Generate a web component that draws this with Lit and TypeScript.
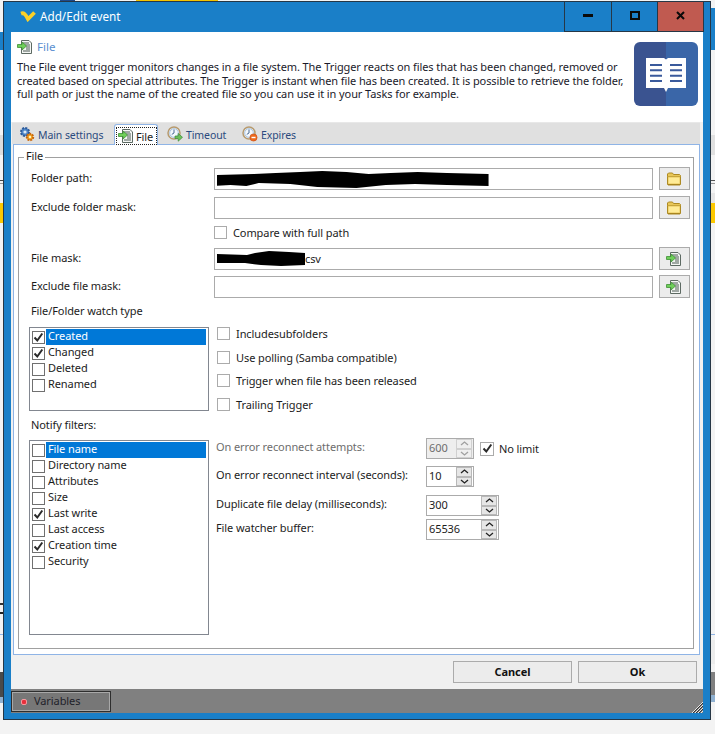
import { LitElement, html, css, svg } from "lit";
import { customElement } from "lit/decorators.js";

const fileIcon = () => html`<svg class="ic" width="16" height="16" viewBox="0 0 16 16">
  <path d="M4.500 1.500h7.500l2.500 2.500v10.500h-10z" fill="#f4f6f4" stroke="#5d6a63"/>
  <path d="M6 4h6M8 6h5M9 8h4M9 10h4M6 12h7" stroke="#4d5a55" stroke-width="1"/>
  <path d="M0.500 5.500h4.500v-2.500l4.500 4-4.500 4v-2.500h-4.500z" fill="#6fcf5a" stroke="#3f8f35" stroke-width=".8"/>
</svg>`;

const gearIcon = () => html`<svg class="ic" width="16" height="16" viewBox="0 0 16 16">
  <circle cx="6" cy="6" r="4" fill="#4f86c8" stroke="#2c5a9a" stroke-width="2" stroke-dasharray="2 1.100"/>
  <circle cx="6" cy="6" r="1.600" fill="#dbe8f6"/>
  <circle cx="11" cy="11" r="3.200" fill="#f0a020" stroke="#c8660e" stroke-width="2" stroke-dasharray="1.800 1"/>
  <circle cx="11" cy="11" r="1.200" fill="#fff2c4"/>
</svg>`;

const clockIcon = (badge: string) => html`<svg class="ic" width="16" height="16" viewBox="0 0 16 16">
  <circle cx="7" cy="7" r="6" fill="#e6eef6" stroke="#b79a6e" stroke-width="1.500"/>
  <circle cx="7" cy="7" r="4.300" fill="#f4f8fc" stroke="#8fb0d4" stroke-width=".7"/>
  <path d="M7 3.500v3.500l-2.200 1.400" fill="none" stroke="#4a6a94" stroke-width="1"/>
  ${badge === "go"
    ? svg`<path d="M8 10h3.200v-2.600l4.300 3.900-4.300 3.900v-2.600h-3.200z" fill="#6cc05a" stroke="#3d8a36" stroke-width=".7"/>`
    : svg`<circle cx="11.500" cy="11.500" r="3.600" fill="#ee6a1e" stroke="#c94a10" stroke-width=".6"/><path d="M9.500 11.500h4" stroke="#fff" stroke-width="1.400"/>`}
</svg>`;

const folderIcon = () => html`<svg width="16" height="14" viewBox="0 0 16 14">
  <path d="M1.500 12.500v-10.500l1-1h4l1 1.500h6l1 1v9l-.5.500h-12z" fill="#e8c658" stroke="#ad8a24"/>
  <path d="M2.500 5.500h11v6h-11z" fill="#ffeb96"/>
  <path d="M1.500 4.500h13" stroke="#c7a53c"/>
  <path d="M2 12.500h12" stroke="#a8841e"/>
</svg>`;

const check = (on: boolean) => html`<span class="cb">${on
  ? html`<svg width="11" height="11" viewBox="0 0 11 11"><path d="M1.500 5.500l2.800 3 5-7" fill="none" stroke="#2a2a2a" stroke-width="2"/></svg>`
  : ""}</span>`;

const spin = (value: string, wide: boolean, off = false) => html`<div class="spin ${wide ? "wide" : ""} ${off ? "off" : ""}">
  <span class="val">${value}</span>
  <span class="arrows">
    <span class="ar"><svg width="9" height="5" viewBox="0 0 9 5"><path d="M1 4l3.500-3 3.500 3" fill="none" stroke="currentColor" stroke-width="1.300"/></svg></span>
    <span class="ar"><svg width="9" height="5" viewBox="0 0 9 5"><path d="M1 1l3.500 3 3.500-3" fill="none" stroke="currentColor" stroke-width="1.300"/></svg></span>
  </span>
</div>`;

const BACKDROP = [
  [60, 0, 15, 1, "#1f4a8a"], [136, 0, 82, 1, "#f4c400"],
  [0, 32, 3, 18, "#1a7fc8"], [0, 135, 3, 20, "#dcdcdc"], [0, 180, 3, 1, "#444"], [0, 183, 3, 1, "#999"],
  [0, 203, 3, 20, "#fcc800"], [0, 603, 3, 2, "#333"], [0, 612, 3, 2, "#222"], [0, 634, 3, 1, "#8fb4e6"],
  [0, 672, 3, 25, "#4a4a4a"], [0, 697, 3, 6, "#8fb0d0"],
  [711, 8, 4, 42, "#1a7fc8"], [711, 135, 4, 20, "#e0e0e0"], [711, 180, 4, 1, "#555"], [711, 183, 4, 1, "#999"],
  [711, 193, 4, 10, "#e6e6e6"], [711, 203, 4, 20, "#fcc800"], [711, 634, 4, 1, "#8fb4e6"],
  [711, 640, 4, 24, "#ececec"], [711, 672, 4, 23, "#808080"], [711, 695, 4, 7, "#8fb0d0"],
];

const TABS = [
  { label: "Main settings", icon: gearIcon, w: 83, m: 0 },
  { label: "File", icon: fileIcon, w: 44, m: 12, active: true },
  { label: "Timeout", icon: () => clockIcon("go"), w: 61, m: 9 },
  { label: "Expires", icon: () => clockIcon("stop"), w: 54, m: 14 },
];

const WATCH = [["Created", true], ["Changed", true], ["Deleted", false], ["Renamed", false]] as [string, boolean][];
const NOTIFY = [
  ["File name", false], ["Directory name", false], ["Attributes", false], ["Size", false],
  ["Last write", true], ["Last access", false], ["Creation time", true], ["Security", false],
] as [string, boolean][];

@customElement("app-root")
export class AppRoot extends LitElement {
  static styles = css`
    :host {
      display: block; position: relative; width: 715px; height: 734px; overflow: hidden;
      background: #f3f3f3; font-family: "Noto Sans", "Liberation Sans", sans-serif; font-size: 11px;
      letter-spacing: -0.09px; color: #1c1c1c; box-sizing: border-box; padding: 1px 4px 0 3px;
    }
    * { box-sizing: border-box; }
    .bd { position: absolute; }
    .window {
      position: relative; width: 708px; height: 719px; border: 1px solid #263746; background: #1a7fc8;
      padding: 0 7px 6px 7px; display: flex; flex-direction: column;
    }
    .title { height: 30px; display: flex; align-items: center; color: #fff; font-size: 11.7px; letter-spacing: 0; flex: none; }
    .logo { margin-left: 9px; margin-right: 4px; margin-top: -2px; }
    .title-text { flex: 1; margin-top: -2px; }
    .wbtns { display: flex; height: 30px; margin-right: -1px; border-bottom: 1px solid #263746; border-right: 1px solid #263746; }
    .wb { width: 47px; border-left: 1px solid #263746; display: flex; align-items: center; justify-content: center; padding-bottom: 2px; }
    .wb.x { background: #c05a50; width: 46px; }
    .wb.mid { width: 46px; }
    .body { flex: 1; background: #f0f0f0; display: flex; flex-direction: column; min-height: 0; }
    .head { height: 90px; flex: none; background: #fff; display: flex; padding: 7px 5px 0 6px; justify-content: space-between; }
    .head-row { display: flex; align-items: center; height: 16px; gap: 4px; color: #5a8fd0; font-size: 11.6px; letter-spacing: 0; }
    .head-row span { margin-top: -2px; }
    .desc { margin-top: 5px; line-height: 13.5px; white-space: nowrap; color: #1a1a2a; }
    .book { margin-top: 3px; flex: none; display: block; }
    .strip {
      height: 22px; flex: none; background: #e0e0e0; margin: 0 3px 0 1px; padding: 2px 0 0 7px; display: flex;
      border-top: 1px solid #e8e8e8; position: relative; z-index: 1; font-size: 10.5px;
    }
    .tab { height: 20px; display: flex; align-items: center; gap: 3px; color: #2b4a7e; flex: none; white-space: nowrap; margin-top: -1px; }
    .tab > span { padding-top: 1px; }
    .tab.on {
      height: 21px; background: #fff; border: 1px solid #8fb4e6; border-bottom: none; border-radius: 3px 3px 0 0;
      padding: 2px 1px 0 2px; margin-top: -1px; color: #1c1c1c; gap: 0; margin-bottom: -1px; font-size: 11px;
    }
    .focus { display: flex; align-items: center; gap: 2px; height: 16px; width: 100%; outline: 1px dotted #222; outline-offset: 0; padding-left: 1px; }
    .ic { flex: none; display: block; }
    .panel {
      margin: 0 3px 0 2px; height: 511px; flex: none; background: #fff; border: 1px solid #8fb4e6; padding: 5px 5px 5px 4px;
    }
    fieldset { margin: 0; height: 100%; min-width: 0; border: 1px solid #a0a0a0; padding: 0 3px 0 12px; }
    legend { margin-left: -7px; padding: 0 2px; line-height: 12px; height: 14px; }
    .row { display: flex; align-items: center; height: 23px; }
    .r1 { margin-top: 3px; } .r2 { margin-top: 6px; } .r3 { margin-top: 8px; } .r4 { margin-top: 5px; }
    .lbl { width: 183px; flex: none; white-space: nowrap; padding-bottom: 2px; }
    .input {
      width: 439px; height: 22px; flex: none; border: 1px solid #ababab; background: #fff; display: flex; align-items: center; overflow: hidden;
      padding-left: 2px; margin-right: 6px; white-space: nowrap;
    }
    .pick { width: 31px; height: 23px; flex: none; background: #ececec; border: 1px solid #ababab; display: flex; align-items: center; justify-content: center; padding-right: 2px; }
    .cmp { display: flex; align-items: center; gap: 6px; height: 13px; margin: 7px 0 0 183px; white-space: nowrap; }
    .cb { width: 13px; height: 13px; flex: none; border: 1px solid #ababab; background: #fff; display: flex; align-items: center; justify-content: center; }
    .plain { margin-top: 6px; height: 14px; line-height: 14px; white-space: nowrap; }
    .split { display: flex; margin-top: 9px; margin-left: -2px; }
    .list { width: 180px; flex: none; border: 1px solid #828790; padding: 1px 2px 0 2px; background: #fff; }
    .list.a { height: 84px; } .list.b { height: 195px; }
    .it { height: 16px; display: flex; align-items: center; }
    .it .cb { border-color: #707070; }
    .it .t { flex: 1; height: 16px; line-height: 14px; padding-left: 2px; margin-left: 1px; white-space: nowrap; }
    .it.sel .t { background: #0078d7; color: #fff; }
    .opts { margin-left: 8px; display: flex; flex-direction: column; }
    .opt { display: flex; align-items: center; gap: 6px; height: 13px; white-space: nowrap; }
    .opt + .opt { margin-top: 10.5px; }
    .lower { display: flex; margin-left: -2px; }
    .left-col { flex: none; }
    .notify { margin-top: 7px; margin-left: 2px; height: 14px; line-height: 14px; }
    .left-col .list { margin-top: 8px; }
    .right-col { margin-left: 7px; padding-top: 27px; }
    .sr { display: flex; align-items: center; height: 21px; white-space: nowrap; }
    .sr + .sr { margin-top: 8px; }
    .sr.second { margin-top: 7px; }
    .sr.tight { margin-top: 3px; }
    .sr .sl { width: 210px; flex: none; padding-bottom: 4px; }
    .sr.off .sl { color: #6d6d6d; }
    .spin { width: 48px; height: 21px; border: 1px solid #ababab; background: #fff; display: flex; align-items: center; flex: none; position: relative; padding-left: 2px; }
    .spin.wide { width: 73px; }
    .spin.off { background: #eeeeee; color: #6d6d6d; }
    .val { flex: 1; padding-bottom: 3px; }
    .arrows { width: 16px; height: 19px; display: flex; flex-direction: column; margin-right: 1px; flex: none; }
    .ar { flex: 1; background: #e6e6e6; border: 1px solid #b8b8b8; display: flex; align-items: center; justify-content: center; color: #222; }
    .off .ar { background: #efefef; border-color: #d0d0d0; color: #a0a0a0; }
    .nolimit { display: flex; align-items: center; gap: 5px; margin-left: 6px; color: #1c1c1c; }
    .nolimit .cb { width: 14px; height: 14px; }
    .nolimit span + span { padding-bottom: 1px; }
    .actions { height: 34px; flex: none; display: flex; justify-content: flex-end; gap: 6px; padding: 6px 6px 0 0; }
    .btn { width: 119px; height: 22px; background: #ececec; border: 1px solid #ababab; font-weight: 700; display: flex; align-items: center; justify-content: center; color: #111; padding-bottom: 2px; }
    .bar { height: 24px; flex: none; background: #808080; padding-top: 2px; position: relative; }
    .task {
      width: 100px; height: 21px; background: #777; border: 1px solid #2e2e2e; box-shadow: inset 0 0 0 1px #a8a8a8;
      display: flex; align-items: center; gap: 7px; padding-left: 9px; padding-bottom: 2px; color: #1f1f2a;
    }
    .dot { width: 6px; height: 6px; border-radius: 2px; background: #e8303c; border: 1px solid #f59aa0; flex: none; margin-top: 2px; }
    .grip { position: absolute; right: 0; bottom: 0; display: block; }
    .blob { display: block; flex: none; }
  `;

  render() {
    return html`
      ${BACKDROP.map(([x, y, w, h, c]) => html`<div class="bd" style="left:${x}px;top:${y}px;width:${w}px;height:${h}px;background:${c}"></div>`)}
      <div class="window">
        <div class="title">
          <svg class="logo" width="16" height="11" viewBox="0 0 16 11"><path d="M1 2.500C4 1.500 5.500 3.500 8 8L14.500 1.500" fill="none" stroke="#fbd028" stroke-width="3.800"/></svg>
          <span class="title-text">Add/Edit event</span>
          <div class="wbtns">
            <div class="wb"><svg width="10" height="3"><rect width="10" height="3" fill="#0a0a0a"/></svg></div>
            <div class="wb mid"><svg width="10" height="9"><rect x="1" y="1" width="8" height="7" fill="none" stroke="#0a0a0a" stroke-width="2"/></svg></div>
            <div class="wb x"><svg width="9" height="9" viewBox="0 0 9 9"><path d="M1 1l7 7M8 1l-7 7" stroke="#0a0a0a" stroke-width="2"/></svg></div>
          </div>
        </div>
        <div class="body">
          <div class="head">
            <div>
              <div class="head-row">${fileIcon()}<span>File</span></div>
              <div class="desc">The File event trigger monitors changes in a file system. The Trigger reacts on files that has been changed, removed or<br>created based on special attributes. The Trigger is instant when file has been created. It is possible to retrieve the folder,<br>full path or just the name of the created file so you can use it in your Tasks for example.</div>
            </div>
            <svg class="book" width="64" height="64" viewBox="0 0 64 64">
              <path d="M32 0h-26a6 6 0 0 0-6 6v52a6 6 0 0 0 6 6h26z" fill="#3a5390"/>
              <path d="M32 0h26a6 6 0 0 1 6 6v52a6 6 0 0 1-6 6h-26z" fill="#3a66a8"/>
              <path d="M12 16h18l2 1.500 2-1.500h18v30h-18l-2 4-2-4h-18z" fill="#fff"/>
              <path d="M16 23h12M16 28.300h12M16 33.700h12M16 39h12M36 23h12M36 28.300h12M36 33.700h12M36 39h12" stroke="#3a5a9c" stroke-width="2"/>
            </svg>
          </div>
          <div class="strip">
            ${TABS.map((t) => t.active
              ? html`<div class="tab on" style="width:${t.w}px;margin-left:${t.m}px"><div class="focus">${t.icon()}<span>${t.label}</span></div></div>`
              : html`<div class="tab" style="width:${t.w}px;margin-left:${t.m}px">${t.icon()}<span>${t.label}</span></div>`)}
          </div>
          <div class="panel">
            <fieldset>
              <legend>File</legend>
              <div class="row r1">
                <span class="lbl">Folder path:</span>
                <div class="input"><svg class="blob" width="274" height="18" viewBox="0 0 224 18" preserveAspectRatio="none"><path d="M0 5l30-1 18-1 20-1 18-1 20 1 18 2 18-1 22-1 24 1 34 1 0 12-34-1-26-1-24 1-24 3-32-1-22-3-26-1-10 3-13-1-16 1z" fill="#000"/></svg></div>
                <div class="pick">${folderIcon()}</div>
              </div>
              <div class="row r2">
                <span class="lbl">Exclude folder mask:</span>
                <div class="input"></div>
                <div class="pick">${folderIcon()}</div>
              </div>
              <div class="cmp">${check(false)}<span>Compare with full path</span></div>
              <div class="row r3">
                <span class="lbl">File mask:</span>
                <div class="input"><svg class="blob" width="88" height="15" viewBox="0 0 88 15"><path d="M0 3l30 1 8-2 14-2 20 1 16 1 0 12-24 1-20-1-16-2-28 0z" fill="#000"/></svg><span>csv</span></div>
                <div class="pick">${fileIcon()}</div>
              </div>
              <div class="row r4">
                <span class="lbl">Exclude file mask:</span>
                <div class="input"></div>
                <div class="pick">${fileIcon()}</div>
              </div>
              <div class="plain">File/Folder watch type</div>
              <div class="split">
                <div class="list a">
                  ${WATCH.map(([t, on], i) => html`<div class="it ${i === 0 ? "sel" : ""}">${check(on)}<span class="t">${t}</span></div>`)}
                </div>
                <div class="opts">
                  <div class="opt">${check(false)}<span>Includesubfolders</span></div>
                  <div class="opt">${check(false)}<span>Use polling (Samba compatible)</span></div>
                  <div class="opt">${check(false)}<span>Trigger when file has been released</span></div>
                  <div class="opt">${check(false)}<span>Trailing Trigger</span></div>
                </div>
              </div>
              <div class="lower">
                <div class="left-col">
                  <div class="notify">Notify filters:</div>
                  <div class="list b">
                    ${NOTIFY.map(([t, on], i) => html`<div class="it ${i === 0 ? "sel" : ""}">${check(on)}<span class="t">${t}</span></div>`)}
                  </div>
                </div>
                <div class="right-col">
                  <div class="sr off"><span class="sl">On error reconnect attempts:</span>${spin("600", false, true)}
                    <span class="nolimit">${check(true)}<span>No limit</span></span></div>
                  <div class="sr second"><span class="sl">On error reconnect interval (seconds):</span>${spin("10", false)}</div>
                  <div class="sr"><span class="sl">Duplicate file delay (milliseconds):</span>${spin("300", true)}</div>
                  <div class="sr tight"><span class="sl">File watcher buffer:</span>${spin("65536", true)}</div>
                </div>
              </div>
            </fieldset>
          </div>
          <div class="actions"><div class="btn">Cancel</div><div class="btn">Ok</div></div>
          <div class="bar">
            <div class="task"><span class="dot"></span><span>Variables</span></div>
            <svg class="grip" width="11" height="11" viewBox="0 0 11 11"><path d="M0 11L11 0M3 11L11 3M6 11L11 6M9 11L11 9" stroke="#e8e8e8" stroke-width="1"/><path d="M1 11L11 1M4 11L11 4M7 11L11 7" stroke="#333" stroke-width="1"/></svg>
          </div>
        </div>
      </div>
    `;
  }
}
